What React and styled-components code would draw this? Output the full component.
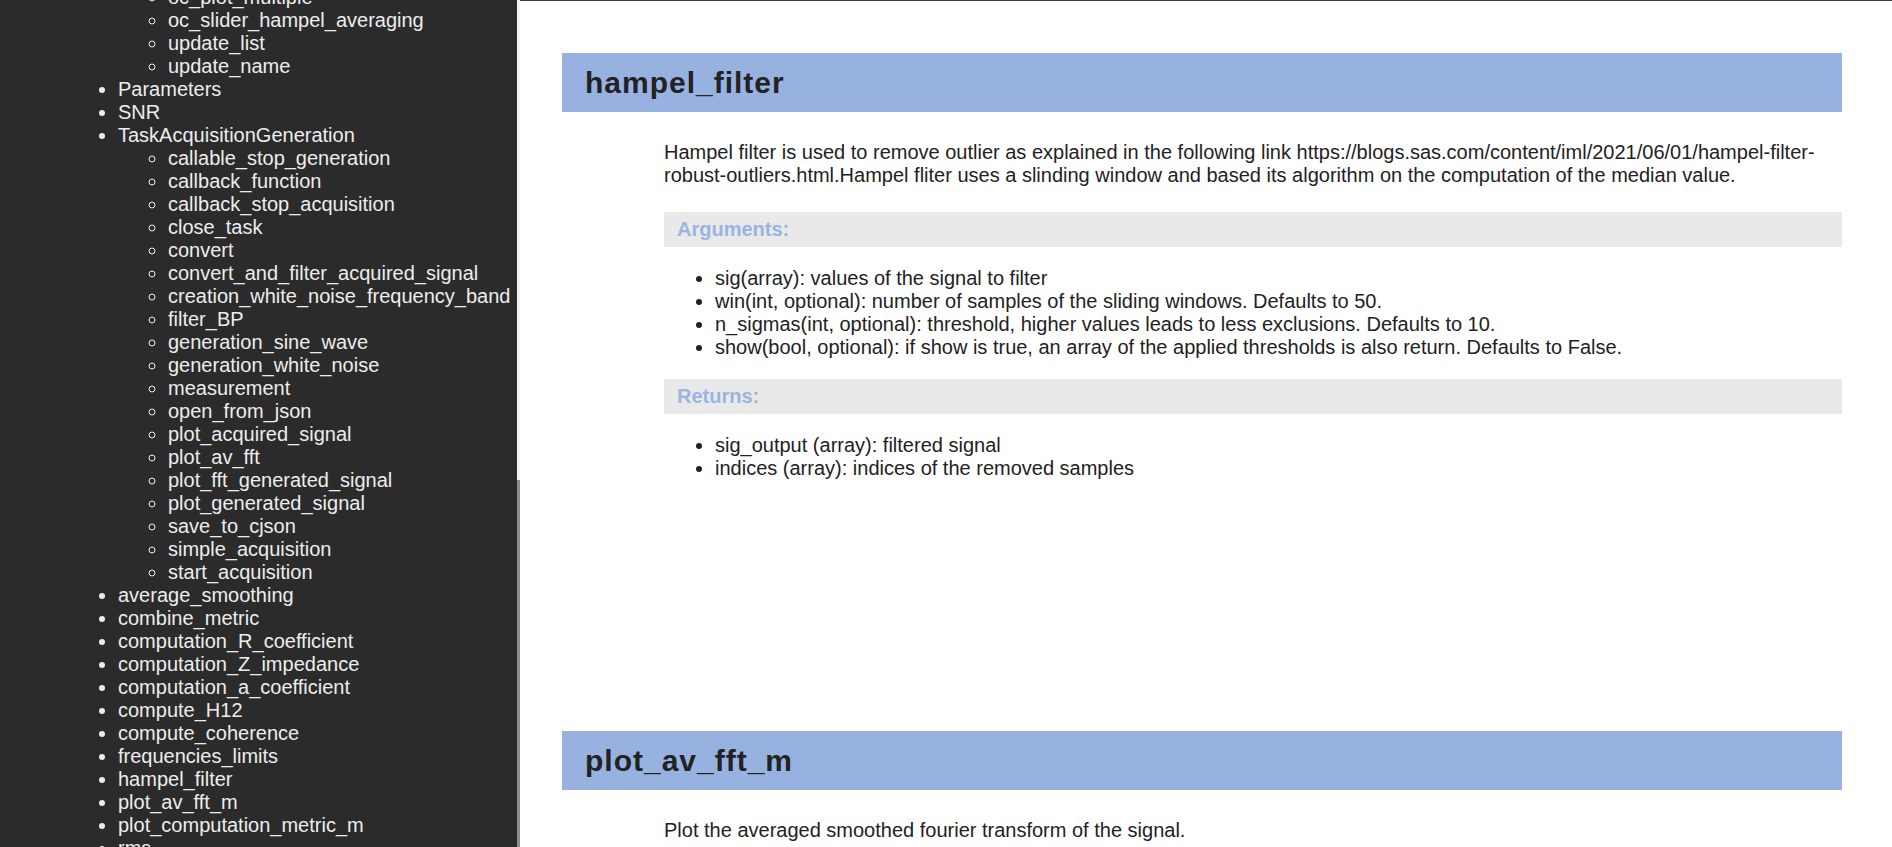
import React from 'react';
import styled, {createGlobalStyle} from 'styled-components';

const GlobalStyle = createGlobalStyle`
  html, body {
    margin: 0;
    padding: 0;
    height: 100%;
    overflow: hidden;
    background: #fff;
    font-family: "Liberation Sans", Arial, sans-serif;
  }
  #root {
    height: 100%;
  }
`;

const Page = styled.div`
  display: flex;
  height: 100vh;
  overflow: hidden;
  font-size: 20px;
`;

const Sidebar = styled.nav`
  display: flex;
  width: 520px;
  flex: none;
  background: #2b2b2b;
  color: #ededed;
`;

const SidebarScroll = styled.div`
  flex: 1;
  overflow: hidden;
  padding-left: 68px;
`;

const Track = styled.div`
  width: 3px;
  display: flex;
  flex-direction: column;
  background: #f3f3f3;
`;

const Thumb = styled.div`
  margin-top: 480px;
  flex: 1;
  background: #8c8c8c;
`;

const NavList = styled.ul`
  margin: ${props => (props.$nested ? '0' : '-14px 0 0')};
  padding-left: 50px;
  list-style: ${props => (props.$nested ? 'circle' : 'disc')};
  line-height: 23px;
  white-space: nowrap;
`;

const NavItem = styled.li`
  list-style: ${props => (props.$continued ? 'none' : 'inherit')};
`;

const Main = styled.main`
  flex: 1;
  border-top: 1px solid #3a3a3a;
  padding: 52px 50px 0 42px;
  overflow: hidden;
  color: #222;
`;

const Section = styled.section`
  min-height: 678px;
`;

const Title = styled.h2`
  margin: 0;
  height: 59px;
  padding-left: 23px;
  background: #97b2e1;
  font-size: 30px;
  line-height: 59px;
  font-weight: bold;
  letter-spacing: 1px;
  color: #222;
`;

const Body = styled.div`
  margin-left: 102px;
  padding-top: 29px;
`;

const Text = styled.p`
  margin: 0 0 25px;
  line-height: 23px;
`;

const Label = styled.div`
  background: #e9e9e9;
  padding: 6px 13px;
  line-height: 23px;
  font-weight: bold;
  color: #9ab4e4;
`;

const Items = styled.ul`
  margin: 20px 0;
  padding-left: 51px;
  line-height: 23px;
`;

// the sidebar is scrolled: the parent of the first group sits above the fold
const continued = [
  'oc_plot_multiple',
  'oc_slider_hampel_averaging',
  'update_list',
  'update_name',
];

const tree = [
  {name: 'Parameters'},
  {name: 'SNR'},
  {
    name: 'TaskAcquisitionGeneration',
    children: [
      'callable_stop_generation',
      'callback_function',
      'callback_stop_acquisition',
      'close_task',
      'convert',
      'convert_and_filter_acquired_signal',
      'creation_white_noise_frequency_band',
      'filter_BP',
      'generation_sine_wave',
      'generation_white_noise',
      'measurement',
      'open_from_json',
      'plot_acquired_signal',
      'plot_av_fft',
      'plot_fft_generated_signal',
      'plot_generated_signal',
      'save_to_cjson',
      'simple_acquisition',
      'start_acquisition',
    ],
  },
  {name: 'average_smoothing'},
  {name: 'combine_metric'},
  {name: 'computation_R_coefficient'},
  {name: 'computation_Z_impedance'},
  {name: 'computation_a_coefficient'},
  {name: 'compute_H12'},
  {name: 'compute_coherence'},
  {name: 'frequencies_limits'},
  {name: 'hampel_filter'},
  {name: 'plot_av_fft_m'},
  {name: 'plot_computation_metric_m'},
  {name: 'rms'},
];

const NavTree = () => (
  <NavList>
    <NavItem $continued>
      <NavList $nested>
        {continued.map(name => <li key={name}>{name}</li>)}
      </NavList>
    </NavItem>
    {tree.map(item => (
      <NavItem key={item.name}>
        {item.name}
        {item.children && (
          <NavList $nested>
            {item.children.map(name => <li key={name}>{name}</li>)}
          </NavList>
        )}
      </NavItem>
    ))}
  </NavList>
);

export default function App() {
  return (
    <Page>
      <GlobalStyle/>
      <Sidebar>
        <SidebarScroll>
          <NavTree/>
        </SidebarScroll>
        <Track>
          <Thumb/>
        </Track>
      </Sidebar>
      <Main>
        <Section>
          <Title>hampel_filter</Title>
          <Body>
            <Text>
              Hampel filter is used to remove outlier as explained in the following link https://blogs.sas.com/content/iml/2021/06/01/hampel-filter-robust-outliers.html.Hampel fliter uses a slinding window and based its algorithm on the computation of the median value.
            </Text>
            <Label>Arguments:</Label>
            <Items>
              <li>sig(array): values of the signal to filter</li>
              <li>win(int, optional): number of samples of the sliding windows. Defaults to 50.</li>
              <li>n_sigmas(int, optional): threshold, higher values leads to less exclusions. Defaults to 10.</li>
              <li>show(bool, optional): if show is true, an array of the applied thresholds is also return. Defaults to False.</li>
            </Items>
            <Label>Returns:</Label>
            <Items>
              <li>sig_output (array): filtered signal</li>
              <li>indices (array): indices of the removed samples</li>
            </Items>
          </Body>
        </Section>
        <Section>
          <Title>plot_av_fft_m</Title>
          <Body>
            <Text>Plot the averaged smoothed fourier transform of the signal.</Text>
          </Body>
        </Section>
      </Main>
    </Page>
  );
}
